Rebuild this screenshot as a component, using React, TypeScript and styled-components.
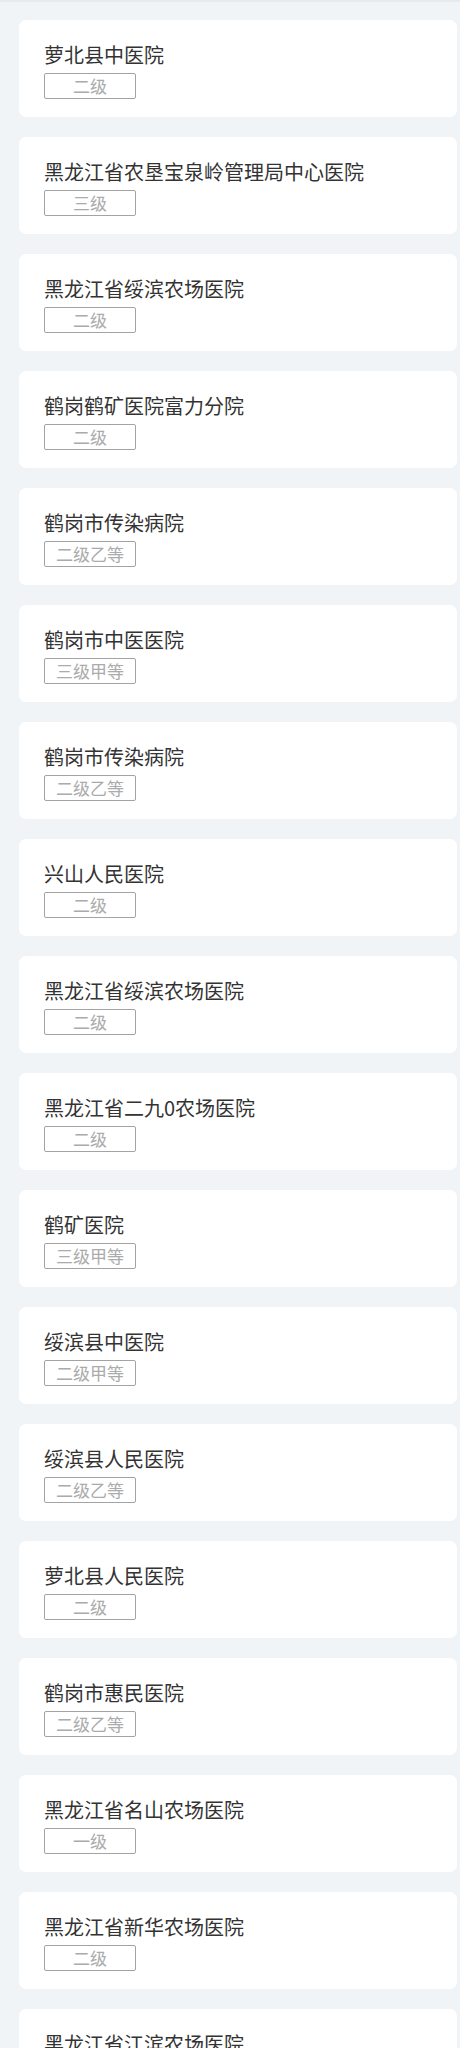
import React from "react";
import styled, { createGlobalStyle } from "styled-components";

const GlobalStyle = createGlobalStyle`
  html, body {
    margin: 0;
    padding: 0;
    background: #f0f4f7;
  }
  body {
    font-family: "Microsoft YaHei", "Noto Sans CJK SC", "Noto Sans", sans-serif;
  }
  * { box-sizing: border-box; }
`;

const Page = styled.div`
  min-height: 2048px;
  background: #f0f4f7;
  border-top: 2px solid #e6ebef;
  padding: 18px 3px 20px 19px;
  display: flex;
  flex-direction: column;
  gap: 20px;
`;

const Card = styled.div`
  background: #ffffff;
  border-radius: 7px;
  height: 97px;
  padding: 21px 25px 0 25px;
  display: flex;
  flex-direction: column;
  align-items: flex-start;
`;

const Name = styled.div`
  font-size: 20px;
  line-height: 28px;
  color: #333333;
  white-space: nowrap;
`;

const Level = styled.div`
  margin-top: 4px;
  width: 92px;
  height: 26px;
  border: 1px solid #a3a3a3;
  border-radius: 2px;
  color: #ababab;
  font-size: 17px;
  line-height: 24px;
  text-align: center;
`;

const hospitals: { name: string; level: string }[] = [
  { name: "萝北县中医院", level: "二级" },
  { name: "黑龙江省农垦宝泉岭管理局中心医院", level: "三级" },
  { name: "黑龙江省绥滨农场医院", level: "二级" },
  { name: "鹤岗鹤矿医院富力分院", level: "二级" },
  { name: "鹤岗市传染病院", level: "二级乙等" },
  { name: "鹤岗市中医医院", level: "三级甲等" },
  { name: "鹤岗市传染病院", level: "二级乙等" },
  { name: "兴山人民医院", level: "二级" },
  { name: "黑龙江省绥滨农场医院", level: "二级" },
  { name: "黑龙江省二九0农场医院", level: "二级" },
  { name: "鹤矿医院", level: "三级甲等" },
  { name: "绥滨县中医院", level: "二级甲等" },
  { name: "绥滨县人民医院", level: "二级乙等" },
  { name: "萝北县人民医院", level: "二级" },
  { name: "鹤岗市惠民医院", level: "二级乙等" },
  { name: "黑龙江省名山农场医院", level: "一级" },
  { name: "黑龙江省新华农场医院", level: "二级" },
  { name: "黑龙江省江滨农场医院", level: "二级" },
];

export default function App() {
  return (
    <>
      <GlobalStyle />
      <Page>
        {hospitals.map((h, i) => (
          <Card key={i}>
            <Name>{h.name}</Name>
            <Level>{h.level}</Level>
          </Card>
        ))}
      </Page>
    </>
  );
}
